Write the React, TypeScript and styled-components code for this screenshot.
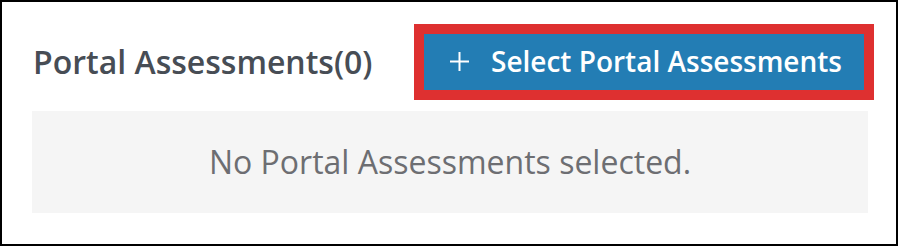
import React from "react";
import styled, { createGlobalStyle } from "styled-components";

const Global = createGlobalStyle`
  html, body { margin: 0; padding: 0; background: #ffffff; }
  body { font-family: "Open Sans", "Liberation Sans", sans-serif; }
  * { box-sizing: border-box; }
`;

const Frame = styled.div`
  width: 898px;
  height: 246px;
  border: 2px solid #000000;
  background: #ffffff;
  padding: 22px 28px 0 30px;
  display: flex;
  flex-direction: column;
`;

const Header = styled.div`
  display: flex;
  align-items: center;
  justify-content: space-between;
  height: 76px;
  margin-bottom: 11px;
`;

const Title = styled.h2`
  margin: 0 0 0 1px;
  font-size: 32px;
  font-weight: 600;
  color: #474d55;
  letter-spacing: 0;
  line-height: 1;
`;

const Highlight = styled.div`
  border: 10px solid #de3030;
  margin-right: -6px;
  display: flex;
`;

const AddButton = styled.button`
  width: 440px;
  height: 56px;
  background: #237db4;
  border: none;
  color: #ffffff;
  font-family: "Open Sans", "Liberation Sans", sans-serif;
  font-size: 28px;
  font-weight: 600;
  display: flex;
  align-items: center;
  justify-content: center;
  gap: 22px;
  padding: 0 0 2px 4px;
  cursor: pointer;
`;

const PlusIcon = styled.svg`
  width: 19px;
  height: 19px;
  flex: none;
`;

const EmptyBox = styled.div`
  width: 836px;
  height: 102px;
  background: #f5f5f5;
  display: flex;
  align-items: center;
  justify-content: center;
  font-size: 32px;
  font-weight: 400;
  color: #6d6e72;
  padding-bottom: 2px;
`;

export default function App() {
  return (
    <>
      <Global />
      <Frame>
        <Header>
          <Title>Portal Assessments(0)</Title>
          <Highlight>
            <AddButton type="button">
              <PlusIcon viewBox="0 0 19 19" aria-hidden="true">
                <path d="M9.5 0v19M0 9.5h19" stroke="#ffffff" strokeWidth="2" fill="none" />
              </PlusIcon>
              <span>Select Portal Assessments</span>
            </AddButton>
          </Highlight>
        </Header>
        <EmptyBox>No Portal Assessments selected.</EmptyBox>
      </Frame>
    </>
  );
}
